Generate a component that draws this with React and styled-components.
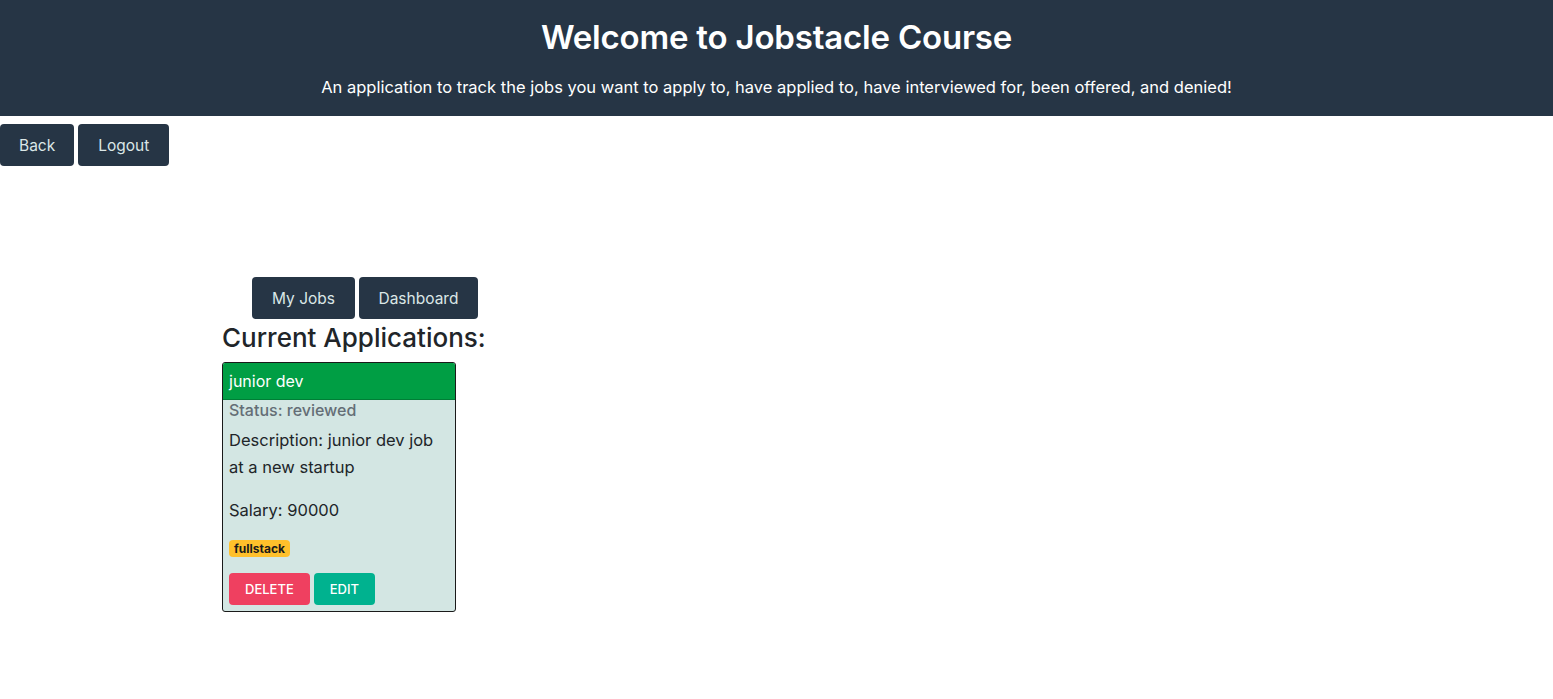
import React from "react";
import styled, { createGlobalStyle } from "styled-components";

const GlobalStyle = createGlobalStyle`
	body {
		margin: 0;
		font-family: Inter, "Noto Sans", sans-serif;
		color: #212529;
		background: #ffffff;
	}
`;

const Header = styled.header`
	background-color: #263545;
	color: #ffffff;
	height: 116px;
	text-align: center;
	padding-top: 16px;
	box-sizing: border-box;
`;

const Title = styled.h1`
	margin: 0;
	font-size: 33px;
	font-weight: 600;
	line-height: 42px;
	letter-spacing: -0.2px;
`;

const Subtitle = styled.p`
	margin: 17px 0 0;
	font-size: 16.5px;
	line-height: 24px;
`;

const ButtonRow = styled.div`
	display: flex;
	gap: 4px;
	padding-left: ${(p) => p.indent || 0}px;
	margin-top: ${(p) => p.top || 0}px;
`;

const NavButton = styled.button`
	background-color: #263545;
	color: #dbe7e7;
	border: none;
	border-radius: 4px;
	height: 42px;
	padding: 0 ${(p) => p.pad || 19}px;
	font-family: Inter, "Noto Sans", sans-serif;
	font-size: 15.5px;
	cursor: pointer;
`;

const Main = styled.main`
	padding-left: 222px;
`;

const Heading = styled.h3`
	margin: 3px 0 8px;
	font-size: 26px;
	font-weight: 500;
	line-height: 32px;
	color: #212529;
`;

const Card = styled.div`
	width: 234px;
	box-sizing: border-box;
	border: 1px solid #1a1a1a;
	border-radius: 3px;
	background-color: #d3e6e3;
	overflow: hidden;
`;

const CardHeader = styled.div`
	background-color: #009e44;
	color: #ffffff;
	height: 36px;
	line-height: 36px;
	padding: 0 6px;
	font-size: 16px;
	border-bottom: 1px solid rgba(0, 0, 0, 0.2);
`;

const CardBody = styled.div`
	padding: 0 6px 6px;
`;

const Status = styled.div`
	color: #646e76;
	font-size: 16px;
	font-weight: 500;
	line-height: 20px;
`;

const Text = styled.p`
	margin: 7px 0 16px;
	font-size: 16.5px;
	line-height: 27px;
	color: #212529;
`;

const Tags = styled.div`
	display: flex;
	gap: 4px;
`;

const Badge = styled.span`
	background-color: #ffc02b;
	color: #1a1a1a;
	font-size: 12px;
	font-weight: 700;
	padding: 2px 5px;
	border-radius: 4px;
	line-height: 13px;
`;

const Actions = styled.div`
	display: flex;
	gap: 4px;
	margin-top: 16px;
`;

const ActionButton = styled.button`
	background-color: ${(p) => p.color};
	color: #ffffff;
	border: none;
	border-radius: 4px;
	height: 32px;
	padding: 0 16px;
	font-family: Inter, "Noto Sans", sans-serif;
	font-size: 13px;
	font-weight: 500;
	text-transform: uppercase;
	cursor: pointer;
`;

const App = () => {
	return (
		<div>
			<GlobalStyle />
			<Header>
				<Title>Welcome to Jobstacle Course</Title>
				<Subtitle>
					An application to track the jobs you want to apply to, have applied to, have interviewed for, been offered, and denied!
				</Subtitle>
			</Header>
			<ButtonRow top={8}>
				<NavButton>Back</NavButton>
				<NavButton pad={20}>Logout</NavButton>
			</ButtonRow>
			<Main>
				<ButtonRow indent={30} top={111}>
					<NavButton pad={20}>My Jobs</NavButton>
					<NavButton pad={19.5}>Dashboard</NavButton>
				</ButtonRow>
				<Heading>Current Applications:</Heading>
				<Card>
					<CardHeader>junior dev</CardHeader>
					<CardBody>
						<Status>Status: reviewed</Status>
						<Text>Description: junior dev job at a new startup</Text>
						<Text>Salary: 90000</Text>
						<Tags>
							<Badge>fullstack</Badge>
						</Tags>
						<Actions>
							<ActionButton color="#ef4060">Delete</ActionButton>
							<ActionButton color="#00b28f">Edit</ActionButton>
						</Actions>
					</CardBody>
				</Card>
			</Main>
		</div>
	);
};

export default App;
